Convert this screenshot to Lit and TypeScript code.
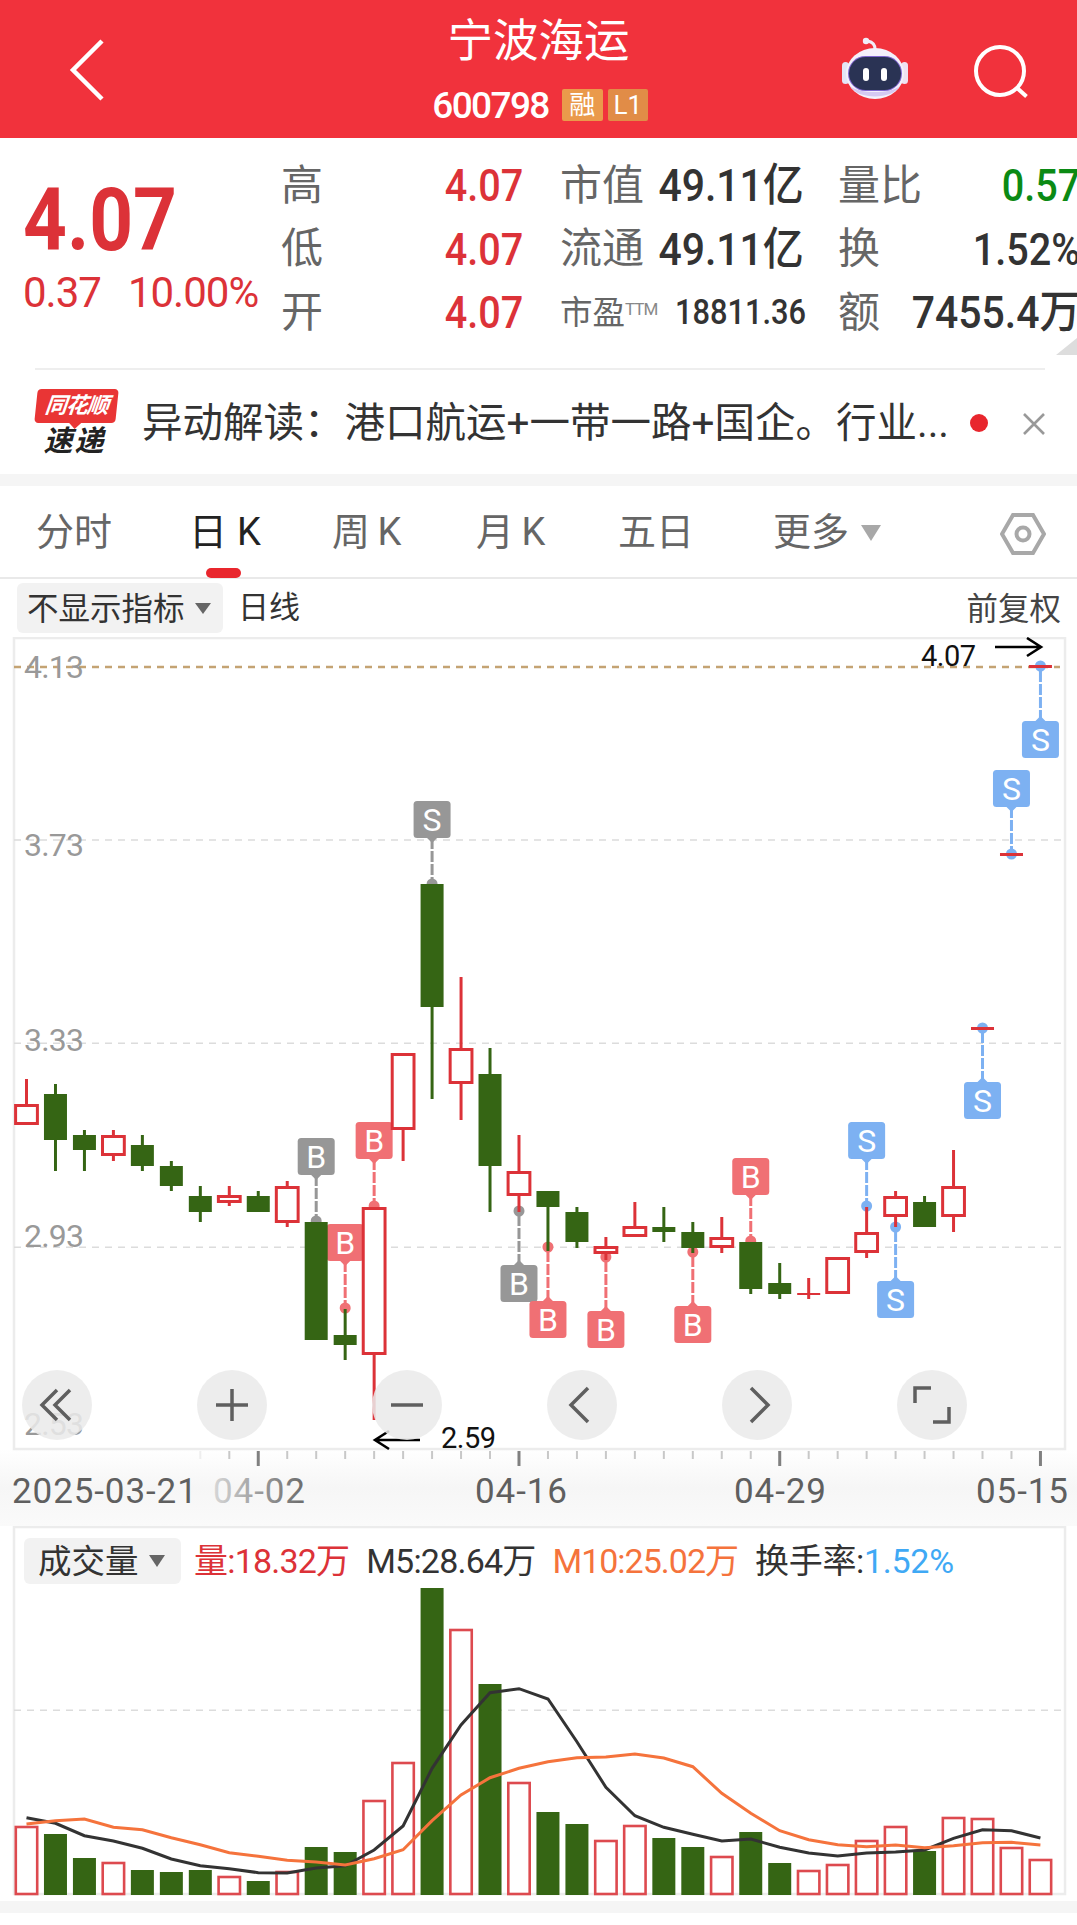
import { LitElement, html, css, svg } from "lit";
import { customElement } from "lit/decorators.js";

const RED = "#dc3238";
const GREEN = "#356514";
const xAt = (i: number) => 26.5 + 28.97 * i;

// wick top, body top, body bottom, wick bottom, up?
type Candle = [number, number, number, number, boolean];
const candles: Candle[] = [
  [1079, 1104, 1125, 1125, true],
  [1084, 1094, 1140, 1171, false],
  [1130, 1135, 1150, 1171, false],
  [1130, 1135, 1156, 1161, true],
  [1135, 1145, 1166, 1171, false],
  [1161, 1166, 1186, 1191, false],
  [1186, 1196, 1212, 1222, false],
  [1186, 1195, 1203, 1206, true],
  [1191, 1196, 1212, 1212, false],
  [1181, 1186, 1223, 1227, true],
  [1222, 1222, 1340, 1340, false],
  [1309, 1335, 1345, 1360, false],
  [1207, 1207, 1355, 1420, true],
  [1053, 1053, 1130, 1161, true],
  [884, 884, 1007, 1099, false],
  [977, 1048, 1084, 1120, true],
  [1048, 1074, 1166, 1212, false],
  [1135, 1171, 1196, 1212, true],
  [1191, 1191, 1207, 1251, false],
  [1207, 1212, 1242, 1248, false],
  [1237, 1246, 1254, 1260, true],
  [1202, 1226, 1237, 1237, true],
  [1207, 1227, 1232, 1242, false],
  [1222, 1232, 1248, 1253, false],
  [1217, 1237, 1248, 1253, true],
  [1242, 1242, 1289, 1294, false],
  [1263, 1283, 1294, 1299, false],
  [1278, 1293, 1294, 1299, true],
  [1257, 1257, 1294, 1294, true],
  [1207, 1232, 1253, 1258, true],
  [1191, 1196, 1217, 1227, true],
  [1196, 1202, 1227, 1227, false],
  [1150, 1186, 1217, 1232, true],
  [1028, 1027, 1029, 1028, true],
  [854, 853, 855, 854, true],
  [666, 665, 667, 666, true],
];

// index, letter, colour, badge top, dot y, badge below the candle?
type Mark = [number, string, string, number, number, boolean];
const PINK = "#f07074";
const GREY = "#979797";
const BLUE = "#7db1f2";
const marks: Mark[] = [
  [10, "B", GREY, 1138, 1221, false],
  [11, "B", PINK, 1224, 1308, false],
  [12, "B", PINK, 1122, 1206, false],
  [14, "S", GREY, 801, 884, false],
  [17, "B", GREY, 1265, 1211, true],
  [18, "B", PINK, 1301, 1247, true],
  [20, "B", PINK, 1311, 1257, true],
  [23, "B", PINK, 1306, 1252, true],
  [25, "B", PINK, 1158, 1241, false],
  [29, "S", BLUE, 1122, 1206, false],
  [30, "S", BLUE, 1281, 1227, true],
  [33, "S", BLUE, 1082, 1028, true],
  [34, "S", BLUE, 770, 854, false],
  [35, "S", BLUE, 721, 666, true],
];

const volumes = [
  1826, 1834, 1858, 1862, 1870, 1872, 1870, 1876, 1881, 1871, 1847, 1852, 1800, 1762, 1588, 1629, 1684, 1782,
  1812, 1824, 1840, 1825, 1838, 1847, 1856, 1832, 1863, 1870, 1864, 1840, 1826, 1851, 1817, 1818, 1847, 1859,
];
const m5 = [
  953, 970, 1007, 1023, 1045, 1077, 1097, 1106, 1118, 1119, 1104, 1097, 1050, 978, 805, 675, 578, 566, 597, 725,
  862, 947, 982, 1003, 1023, 1017, 1042, 1059, 1068, 1059, 1056, 1050, 1015, 989, 992, 1014,
];
const m10 = [
  972, 962, 957, 982, 989, 1013, 1034, 1058, 1069, 1081, 1086, 1095, 1076, 1049, 962, 885, 833, 805, 785, 773,
  771, 762, 774, 800, 880, 940, 992, 1019, 1034, 1040, 1035, 1043, 1037, 1028, 1027, 1035,
];
const linePoints = (a: number[]) => a.map((z, i) => `${xAt(i).toFixed(1)},${(1500 + z / 3).toFixed(1)}`).join(" ");

const priceLabels: [string, number][] = [
  ["4.13", 678],
  ["3.73", 856],
  ["3.33", 1051],
  ["2.93", 1247],
];

@customElement("price-chart")
class PriceChart extends LitElement {
  static styles = css`
    :host {
      display: block;
      position: relative;
      height: 889px;
    }
    svg {
      display: block;
    }
    .price {
      font: 32px Roboto, sans-serif;
      fill: #999;
      letter-spacing: -0.8px;
    }
    .extreme {
      font: 29px Roboto, sans-serif;
      fill: #111;
      letter-spacing: -0.5px;
    }
    .date {
      font: 35px Roboto, sans-serif;
      fill: #5f5f5f;
      letter-spacing: 0.9px;
    }
    .letter {
      font: 32px Roboto, sans-serif;
      fill: #fff;
      text-anchor: middle;
    }
    .round {
      position: absolute;
      top: 733px;
      width: 70px;
      height: 70px;
      border-radius: 50%;
      background: rgba(234, 234, 234, 0.86);
      display: flex;
      align-items: center;
      justify-content: center;
    }
    .round svg {
      width: 40px;
      height: 40px;
      fill: none;
      stroke: #5f5f5f;
      stroke-width: 3.5;
    }
  `;

  private candle(c: Candle, i: number) {
    const x = xAt(i);
    const [wt, bt, bb, wb, up] = c;
    const colour = up ? RED : GREEN;
    const wick = svg`<line x1=${x} x2=${x} y1=${wt} y2=${wb} stroke=${colour} stroke-width="3"></line>`;
    if (bb - bt < 4) {
      return svg`${wick}<rect x=${x - 11.5} y=${bt} width="23" height=${bb - bt + 1} fill=${colour}></rect>`;
    }
    return up
      ? svg`${wick}<rect x=${x - 10.9} y=${bt + 1.5} width="21.8" height=${bb - bt - 3} fill="#fff" stroke=${colour} stroke-width="3"></rect>`
      : svg`${wick}<rect x=${x - 11.5} y=${bt} width="23" height=${bb - bt} fill=${colour}></rect>`;
  }

  private mark(m: Mark) {
    const [i, letter, colour, top, dot, below] = m;
    const x = xAt(i);
    const bottom = top + 37;
    const tip = below ? top - 5 : bottom + 5;
    const tipWing = below ? top + 1 : bottom - 1;
    const lineEnd = below ? top : bottom;
    return svg`
      <line x1=${x} x2=${x} y1=${lineEnd} y2=${dot} stroke=${colour} stroke-width="3" stroke-dasharray="11 2"></line>
      <circle cx=${x} cy=${dot} r="5.5" fill=${colour}></circle>
      <rect x=${x - 18.5} y=${top} width="37" height="37" rx="3.5" fill=${colour}></rect>
      <polygon points="${x - 6},${tipWing} ${x + 6},${tipWing} ${x},${tip}" fill=${colour}></polygon>
      <text class="letter" x=${x} y=${top + 30}>${letter}</text>
    `;
  }

  render() {
    const ticks = Array.from({ length: 30 }, (_, i) => i + 6);
    const majors = [8, 17, 26, 35];
    const tickColour = (i: number) => (majors.includes(i) ? "#808080" : i === 6 ? "#eeeeee" : "#c8c8c8");
    return html`
      <svg width="1077" height="889" viewBox="0 637 1077 889">
        <defs>
          <linearGradient id="axis" x1="0" x2="0" y1="0" y2="1">
            <stop offset="0" stop-color="#fff"></stop>
            <stop offset="0.5" stop-color="#f6f6f6"></stop>
            <stop offset="1" stop-color="#fafafa"></stop>
          </linearGradient>
          <linearGradient id="fade" gradientUnits="userSpaceOnUse" x1="214" x2="300" y1="0" y2="0">
            <stop offset="0" stop-color="#d6d6d6"></stop>
            <stop offset="0.55" stop-color="#999"></stop>
            <stop offset="1" stop-color="#707070"></stop>
          </linearGradient>
        </defs>
        <rect x="0" y="1449" width="1077" height="77" fill="url(#axis)"></rect>
        <rect x="14" y="638" width="1051" height="811" fill="#fff" stroke="#ececec" stroke-width="2.5"></rect>
        ${[840, 1043.3, 1247.3].map(
          (y) => svg`<line x1="14" x2="1063" y1=${y} y2=${y} stroke="#dcdcdc" stroke-width="1.5" stroke-dasharray="7 6"></line>`,
        )}
        <line x1="14" x2="1060" y1="667" y2="667" stroke="#c4a373" stroke-width="2.5" stroke-dasharray="7 6"></line>
        ${priceLabels.map(([t, y]) => svg`<text class="price" x="24" y=${y}>${t}</text>`)}
        <text class="price" x="24" y="1435">2.53</text>
        ${marks.map((m) => this.mark(m))}
        ${candles.map((c, i) => this.candle(c, i))}

        <text class="extreme" x="921" y="666">4.07</text>
        <path d="M995 647H1041M1027 638l14 9-14 9" fill="none" stroke="#000" stroke-width="2.6"></path>
        <text class="extreme" x="441" y="1448">2.59</text>
        <path d="M420 1440H375M389 1431l-14 9 14 9" fill="none" stroke="#000" stroke-width="2.6"></path>

        ${ticks.map((i) => {
          const major = majors.includes(i);
          return svg`<line x1=${xAt(i)} x2=${xAt(i)} y1="1451" y2=${major ? 1466 : 1459}
            stroke=${tickColour(i)} stroke-width=${major ? 3 : 2}></line>`;
        })}
        <text class="date" x="12" y="1503">2025-03-21</text>
        <text class="date" x="213" y="1503" style="fill:url(#fade)">04-02</text>
        <text class="date" x="475" y="1503">04-16</text>
        <text class="date" x="734" y="1503">04-29</text>
        <text class="date" x="976" y="1503">05-15</text>
      </svg>

      <div class="round" style="left:22px">
        <svg viewBox="0 0 40 40"><path d="M20 5 5 20l15 15M33 5 18 20l15 15"></path></svg>
      </div>
      <div class="round" style="left:197px">
        <svg viewBox="0 0 40 40"><path d="M4 20h32M20 4v32"></path></svg>
      </div>
      <div class="round" style="left:372px">
        <svg viewBox="0 0 40 40"><path d="M4 20h32"></path></svg>
      </div>
      <div class="round" style="left:547px">
        <svg viewBox="0 0 40 40"><path d="M26 3 9 20l17 17"></path></svg>
      </div>
      <div class="round" style="left:722px">
        <svg viewBox="0 0 40 40"><path d="M14 3l17 17-17 17"></path></svg>
      </div>
      <div class="round" style="left:897px">
        <svg viewBox="0 0 40 40"><path d="M3 18V3h16M21 37h16V22"></path></svg>
      </div>
    `;
  }
}

@customElement("volume-chart")
class VolumeChart extends LitElement {
  static styles = css`
    :host {
      display: block;
      position: relative;
      height: 375px;
    }
    svg {
      display: block;
    }
    .legend {
      position: absolute;
      left: 24px;
      top: 12px;
      height: 46px;
      display: flex;
      font: 34px/47px Roboto, "Noto Sans CJK SC", sans-serif;
      color: #333;
      white-space: nowrap;
    }
    .chip {
      width: 157px;
      height: 46px;
      box-sizing: border-box;
      padding: 0 0 0 14px;
      display: flex;
      gap: 10px;
      background: #f2f2f2;
      border-radius: 6px;
      margin-right: 13px;
      font-size: 33.5px;
    }
    .chip i {
      margin-top: 17px;
      height: 0;
      border: 8px solid transparent;
      border-top: 12px solid #666;
      border-bottom: 0;
    }
    .item {
      letter-spacing: -0.8px;
    }
    .item.rate {
      letter-spacing: -0.3px;
    }
    .red {
      color: #dc3238;
    }
    .orange {
      color: #f5733c;
      letter-spacing: -1px;
    }
    .blue {
      color: #3fa9f5;
    }
    .gap {
      margin-left: 17px;
    }
  `;

  render() {
    return html`
      <svg width="1077" height="375" viewBox="0 1526 1077 375">
        <rect x="14" y="1527" width="1051" height="367" fill="#fff" stroke="#ececec" stroke-width="2.5"></rect>
        <line x1="14" x2="1063" y1="1710.3" y2="1710.3" stroke="#dcdcdc" stroke-width="1.5" stroke-dasharray="7 6"></line>
        ${volumes.map((top, i) => {
          const x = xAt(i);
          return candles[i][4]
            ? svg`<rect x=${x - 10.7} y=${top + 1} width="21.4" height=${1894 - top - 1} fill="#fff" stroke="#dd4a4f" stroke-width="2.6"></rect>`
            : svg`<rect x=${x - 11.5} y=${top} width="23" height=${1895 - top} fill=${GREEN}></rect>`;
        })}
        <polyline points=${linePoints(m5)} fill="none" stroke="#333" stroke-width="3"></polyline>
        <polyline points=${linePoints(m10)} fill="none" stroke="#f5733c" stroke-width="3"></polyline>
      </svg>
      <div class="legend">
        <div class="chip">成交量<i></i></div>
        <span class="item red">量:18.32万</span>
        <span class="item gap">M5:28.64万</span>
        <span class="item gap orange">M10:25.02万</span>
        <span class="item rate gap">换手率:<span class="blue">1.52%</span></span>
      </div>
    `;
  }
}

@customElement("app-root")
export class AppRoot extends LitElement {
  static styles = css`
    :host {
      display: block;
      width: 1077px;
      height: 1925px;
      overflow: hidden;
      background: #fff;
      font-family: Roboto, "Noto Sans CJK SC", sans-serif;
    }
    .top {
      height: 138px;
      background: #f1323c;
      color: #fff;
      position: relative;
      display: flex;
      flex-direction: column;
      align-items: center;
    }
    .title {
      font-size: 45.5px;
      line-height: 44px;
      margin-top: 20px;
    }
    .code {
      display: flex;
      align-items: center;
      margin-top: 25px;
      height: 32px;
      font-size: 37px;
      font-weight: 500;
      letter-spacing: -1.6px;
      margin-left: 3px;
    }
    .tag {
      width: 41px;
      height: 32px;
      margin-left: 5px;
      border-radius: 2px;
      background: #ea9a4b;
      font-size: 26px;
      font-weight: 400;
      line-height: 32px;
      text-align: center;
      letter-spacing: 0;
    }
    .tag:first-of-type {
      margin-left: 13px;
    }
    .tag.l1 {
      background: #e18c47;
      width: 40px;
    }
    .top svg {
      position: absolute;
      fill: none;
    }
    .back {
      left: 68px;
      top: 38px;
    }
    .bot {
      left: 840px;
      top: 36px;
    }
    .search {
      left: 972px;
      top: 43px;
    }
    .quote {
      height: 231px;
      display: flex;
      overflow: hidden;
    }
    .big {
      flex: none;
      width: 281px;
      box-sizing: border-box;
      color: #dc3238;
      padding-left: 23px;
    }
    .last {
      font-size: 87px;
      font-weight: 700;
      line-height: 84px;
      margin-top: 40px;
      transform: scaleX(0.88);
      transform-origin: left;
    }
    .change {
      display: flex;
      gap: 27px;
      font-size: 42px;
      line-height: 42px;
      margin-top: 10px;
      letter-spacing: -1px;
    }
    .stats {
      flex: none;
      padding-top: 16px;
      display: grid;
      grid-template-columns: 242px 241px 242px;
      column-gap: 37px;
      grid-auto-rows: 63.5px;
      align-items: center;
      font-size: 42px;
      line-height: 1;
      color: #666;
    }
    .cell {
      display: flex;
      justify-content: space-between;
      align-items: center;
    }
    .label {
      white-space: nowrap;
    }
    .v {
      display: inline-block;
      font-size: 45px;
      font-weight: 500;
      white-space: nowrap;
      transform: scaleX(0.88);
      transform-origin: right;
    }
    .v.wide {
      transform: scaleX(0.91);
    }
    .v.cap {
      margin-right: 2px;
    }
    .red {
      color: #dc3238;
    }
    .dark {
      color: #333;
    }
    .green {
      color: #0b8a14;
    }
    .ttm {
      font-size: 32.5px;
    }
    .ttm sup {
      font-size: 17px;
      vertical-align: 9px;
      line-height: 0;
      color: #888;
      letter-spacing: -1px;
    }
    .small-v {
      font-size: 35px;
      margin-right: 4px;
    }
    .corner {
      position: absolute;
      right: 0;
      top: 338px;
      width: 0;
      height: 0;
      border-left: 21px solid transparent;
      border-bottom: 17px solid #ddd;
    }
    .rule {
      height: 2px;
      margin: -1px 32px 0 35px;
      background: #eee;
    }
    .news {
      height: 104px;
      display: flex;
      align-items: center;
      position: relative;
      box-sizing: border-box;
      padding-left: 36px;
    }
    .logo {
      width: 81px;
      flex: none;
      text-align: center;
      font-style: italic;
      font-weight: 700;
    }
    .logo .a {
      background: #e93535;
      color: #fff;
      font-size: 22px;
      line-height: 34px;
      height: 34px;
      border-radius: 4px;
      transform: skewX(-6deg);
      position: relative;
      letter-spacing: -1px;
    }
    .logo .a::after {
      content: "";
      position: absolute;
      left: 35px;
      bottom: -6px;
      border: 6px solid transparent;
      border-top: 6px solid #e93535;
      border-bottom: 0;
    }
    .logo .b {
      color: #222;
      font-size: 29px;
      line-height: 28px;
      margin: 4px 4px 0 0;
      letter-spacing: 2px;
    }
    .headline {
      margin-left: 25px;
      padding-bottom: 6px;
      font-size: 40.5px;
      color: #333;
      white-space: nowrap;
    }
    .dot {
      position: absolute;
      left: 970px;
      top: 44px;
      width: 18px;
      height: 18px;
      border-radius: 50%;
      background: #e8262d;
    }
    .close {
      position: absolute;
      left: 1022px;
      top: 42px;
    }
    .band {
      height: 12px;
      background: #f5f5f5;
    }
    .tabs {
      height: 93px;
      border-bottom: 2px solid #e9e9e9;
      box-sizing: border-box;
      position: relative;
      color: #666;
      font-size: 38px;
    }
    .tab {
      position: absolute;
      top: 22px;
      line-height: 48px;
      white-space: nowrap;
    }
    .tab.on {
      color: #222;
    }
    .tab em {
      font-style: normal;
      letter-spacing: 7.5px;
    }
    .tab.on em {
      letter-spacing: 10px;
    }
    .ind {
      position: absolute;
      left: 206px;
      bottom: -1px;
      width: 35px;
      height: 10px;
      border-radius: 5px;
      background: #e9262d;
    }
    .more {
      position: absolute;
      left: 861px;
      top: 39px;
      border: 10px solid transparent;
      border-top: 16px solid #a8a8a8;
      border-bottom: 0;
    }
    .hex {
      position: absolute;
      left: 1000px;
      top: 26px;
    }
    .sub {
      height: 58px;
      display: flex;
      align-items: center;
      color: #333;
      font-size: 31.5px;
      box-sizing: border-box;
      padding: 0 16px 0 17px;
    }
    .sub-chip {
      width: 206px;
      height: 50px;
      background: #f2f2f2;
      border-radius: 6px;
      box-sizing: border-box;
      padding-left: 10px;
      display: flex;
      align-items: center;
      gap: 10px;
    }
    .sub-chip b {
      font-weight: 400;
      padding-bottom: 5px;
    }
    .sub-chip i {
      border: 8px solid transparent;
      border-top: 11px solid #666;
      border-bottom: 0;
    }
    .sub-name {
      margin-left: 15px;
      font-size: 31px;
      padding-bottom: 7px;
    }
    .sub-right {
      margin-left: auto;
      color: #444;
      padding-bottom: 5px;
    }
    .end {
      height: 12px;
      background: #f5f5f5;
    }
  `;

  render() {
    return html`
      <div class="top">
        <svg class="back" width="38" height="64" viewBox="0 0 38 64" stroke="#fff" stroke-width="4.5">
          <path d="M34 3 5 32l29 29"></path>
        </svg>
        <div class="title">宁波海运</div>
        <div class="code">600798<span class="tag">融</span><span class="tag l1">L1</span></div>
        <svg class="bot" width="70" height="66" viewBox="0 0 70 66">
          <path d="M35 13c0-5-3-7-7-8" stroke="#f1edf8" stroke-width="3"></path>
          <circle cx="26" cy="5" r="3.2" fill="#f1edf8"></circle>
          <rect x="2" y="26" width="7" height="22" rx="3.5" fill="#e3e5f7"></rect>
          <rect x="61" y="26" width="7" height="22" rx="3.5" fill="#efe2f2"></rect>
          <ellipse cx="35" cy="37.5" rx="29" ry="25.5" fill="#f4f1fb"></ellipse>
          <path d="M10 50c8 14 42 14 50 0-10 8-40 8-50 0z" fill="#d5c9f2"></path>
          <rect x="8" y="20" width="54" height="35" rx="17.5" fill="#7f66cf"></rect>
          <rect x="9" y="21" width="52" height="33" rx="16.5" fill="#2a3354"></rect>
          <rect x="23" y="32" width="6" height="13" rx="3" fill="#fff"></rect>
          <rect x="41" y="32" width="6" height="13" rx="3" fill="#fff"></rect>
        </svg>
        <svg class="search" width="58" height="58" viewBox="0 0 58 58" stroke="#fff" stroke-width="4">
          <circle cx="28" cy="28" r="24"></circle>
          <path d="M44.5 44.5l10 9"></path>
        </svg>
      </div>

      <div class="quote">
        <div class="big">
          <div class="last">4.07</div>
          <div class="change"><span>0.37</span><span>10.00%</span></div>
        </div>
        <div class="stats">
          <div class="cell"><span class="label">高</span><span class="v red">4.07</span></div>
          <div class="cell"><span class="label">市值</span><span class="v wide cap dark">49.11亿</span></div>
          <div class="cell"><span class="label">量比</span><span class="v green">0.57</span></div>

          <div class="cell"><span class="label">低</span><span class="v red">4.07</span></div>
          <div class="cell"><span class="label">流通</span><span class="v wide cap dark">49.11亿</span></div>
          <div class="cell"><span class="label">换</span><span class="v dark">1.52%</span></div>

          <div class="cell"><span class="label">开</span><span class="v red">4.07</span></div>
          <div class="cell">
            <span class="label ttm">市盈<sup>TTM</sup></span><span class="v dark small-v">18811.36</span>
          </div>
          <div class="cell"><span class="label">额</span><span class="v wide dark">7455.4万</span></div>
        </div>
      </div>
      <div class="corner"></div>
      <div class="rule"></div>

      <div class="news">
        <div class="logo">
          <div class="a">同花顺</div>
          <div class="b">速递</div>
        </div>
        <div class="headline">异动解读：港口航运+一带一路+国企。行业...</div>
        <div class="dot"></div>
        <svg class="close" width="24" height="24" viewBox="0 0 24 24" stroke="#999" stroke-width="2.6">
          <path d="M2 2l20 20M22 2 2 22"></path>
        </svg>
      </div>
      <div class="band"></div>

      <div class="tabs">
        <span class="tab" style="left:36px">分时</span>
        <span class="tab on" style="left:189px"><em>日</em>K</span>
        <span class="tab" style="left:332px"><em>周</em>K</span>
        <span class="tab" style="left:476px"><em>月</em>K</span>
        <span class="tab" style="left:618px">五日</span>
        <span class="tab" style="left:773px">更多</span>
        <i class="more"></i>
        <svg class="hex" width="46" height="44" viewBox="0 0 46 44" fill="none" stroke="#a8a8a8" stroke-width="4">
          <path d="M13 3h20l11 19-11 19H13L2 22z"></path>
          <circle cx="23" cy="22" r="6.5"></circle>
        </svg>
        <div class="ind"></div>
      </div>

      <div class="sub">
        <div class="sub-chip"><b>不显示指标</b><i></i></div>
        <span class="sub-name">日线</span>
        <span class="sub-right">前复权</span>
      </div>

      <price-chart></price-chart>
      <volume-chart></volume-chart>
      <div class="end"></div>
    `;
  }
}
